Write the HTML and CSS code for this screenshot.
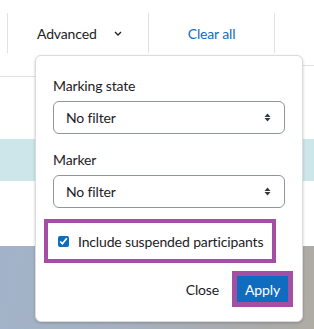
FILE: index.html
```html
<!DOCTYPE html>
<html>
<head>
<meta charset="utf-8">
<link rel="stylesheet" href="styles.css">
</head>
<body>
<div class="page">
  <div class="toolbar">
    <div class="tb-item tb-adv">
      <span>Advanced</span>
      <svg class="chev" width="8" height="5" viewBox="0 0 8 5"><path d="M1 1 L4 4 L7 1" fill="none" stroke="#1d2125" stroke-width="1.3"/></svg>
    </div>
    <div class="tb-item tb-clear"><a class="link">Clear all</a></div>
    <div class="tb-item tb-last"></div>
  </div>
  <div class="rules">
    <div class="rule-left"></div>
    <div class="rule-right"></div>
  </div>
  <div class="info-band"></div>
  <div class="gap"></div>
  <div class="hero"></div>
</div>

<div class="popover">
  <div class="field">
    <label class="lbl">Marking state</label>
    <div class="select"><span>No filter</span>
      <svg width="7" height="9" viewBox="0 0 7 9"><path d="M0.5 4 L3.5 0.5 L6.5 4 Z M0.5 5 L3.5 8.5 L6.5 5 Z" fill="#343a40"/></svg>
    </div>
  </div>
  <div class="field">
    <label class="lbl">Marker</label>
    <div class="select"><span>No filter</span>
      <svg width="7" height="9" viewBox="0 0 7 9"><path d="M0.5 4 L3.5 0.5 L6.5 4 Z M0.5 5 L3.5 8.5 L6.5 5 Z" fill="#343a40"/></svg>
    </div>
  </div>
  <div class="check-row">
    <input type="checkbox" class="chk" checked>
    <span>Include suspended participants</span>
  </div>
  <div class="actions">
    <span class="btn-close">Close</span>
    <span class="btn-apply">Apply</span>
  </div>
</div>
</body>
</html>
```

FILE: styles.css
```css
* { box-sizing: border-box; }
html, body { margin: 0; padding: 0; }
body {
  width: 314px;
  height: 329px;
  overflow: hidden;
  position: relative;
  background: #fff;
  font-family: Lato, "Open Sans", sans-serif;
  font-size: 14px;
  letter-spacing: -0.15px;
  color: #1d2125;
  white-space: nowrap;
}
.page { display: flex; flex-direction: column; height: 329px; }
.toolbar {
  display: flex;
  padding-top: 13px;
  height: 53px;
}
.tb-item {
  border-left: 1px solid #dee2e6;
  height: 40px;
  display: flex;
  align-items: center;
}
.tb-adv { margin-left: 7px; width: 141px; padding-left: 29px; }
.tb-adv .chev { margin-left: 17px; margin-top: 1px; }
.tb-clear { width: 126px; justify-content: center; }
.link { color: #0f6cbf; }
.tb-last { flex: 1; }
.rules { display: flex; height: 24px; }
.rule-left { width: 35px; height: 24px; border-bottom: 1px solid #dee2e6; }
.rule-right { margin-left: auto; width: 11px; margin-top: 12px; border-top: 1px solid #dee2e6; }
.info-band { margin-top: 62px; height: 42px; background: #cde6ea; }
.gap { height: 65px; }
.hero {
  flex: 1;
  background: linear-gradient(100deg, #a2b3c9 0%, #a6b1c0 40%, #aaaaa9 85%, #b0aca4 100%);
}

.popover {
  position: absolute;
  left: 35px;
  top: 55px;
  width: 268px;
  height: 267px;
  background: #fff;
  border: 1px solid #dadcde;
  border-radius: 6px;
  box-shadow: 0 1px 3px rgba(0,0,0,0.2);
  padding: 19px 17px 0 17px;
  display: flex;
  flex-direction: column;
}
.field { display: flex; flex-direction: column; }
.field + .field { margin-top: 15px; }
.lbl { line-height: 21px; margin-bottom: 5px; }
.select {
  height: 33px;
  border: 1px solid #8f959e;
  border-radius: 6px;
  display: flex;
  align-items: center;
  justify-content: space-between;
  padding: 0 13px 0 12px;
}
.check-row {
  margin: 11px 9px 0 -9px;
  height: 44px;
  border: 4px solid #a34fa3;
  display: flex;
  align-items: center;
  padding-left: 9px;
}
.chk {
  width: 11px;
  height: 11px;
  margin: 0 9px 0 1px;
  accent-color: #0f6cbf;
}
.actions {
  margin-top: 8px;
  display: flex;
  justify-content: flex-end;
  align-items: center;
  margin-right: -8px;
}
.btn-close { margin-right: 13px; }
.btn-apply {
  border: 5px solid #a34fa3;
  height: 36px;
  width: 61px;
  background: #0f6cbf;
  color: #fff;
  display: flex;
  align-items: center;
  justify-content: center;
}
```
